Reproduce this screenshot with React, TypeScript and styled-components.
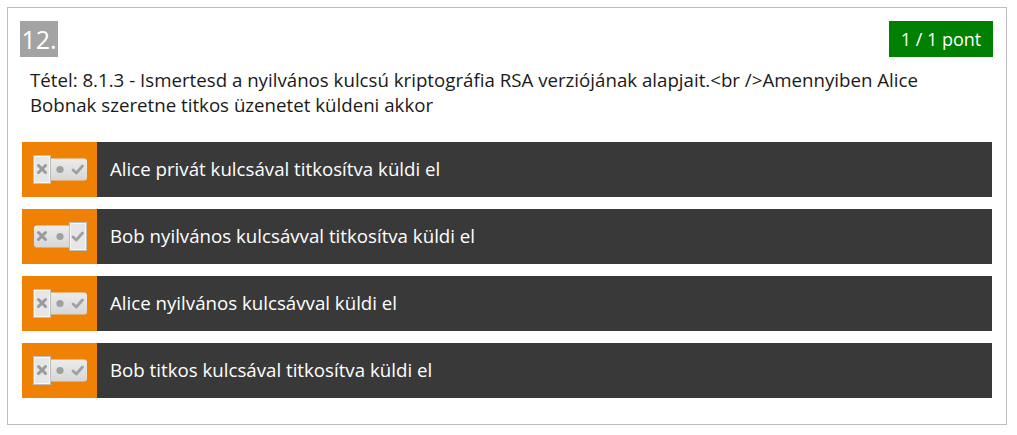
import styled, { createGlobalStyle } from 'styled-components';

const GlobalStyle = createGlobalStyle`
  html, body { margin: 0; padding: 0; background: #ffffff; }
  body { font-family: "Open Sans", "Liberation Sans", sans-serif; }
`;

// ── 스타일 ─────────────────────────────────────────────
const Page = styled.div`
  padding: 7px 10px 10px 7px;
`;

const QuestionBox = styled.div`
  border: 1px solid #bdbdbd;
  padding: 13px 13px 26px 12px;
  display: flex; flex-direction: column;
`;

const Header = styled.div`
  display: flex; align-items: center; justify-content: space-between;
`;

const Number = styled.div`
  background: #a3a3a3;
  color: #ffffff;
  font-size: 25px;
  height: 36px; width: 38px;
  display: flex; align-items: center; justify-content: center;
`;

const Score = styled.div`
  background: #008000;
  color: #ffffff;
  font-size: 18px;
  height: 36px; width: 104px;
  display: flex; align-items: center; justify-content: center;
`;

const Prompt = styled.p`
  margin: 10px 30px 0 10px;
  font-size: 18.7px; line-height: 25px;
  color: #1a1a1a;
`;

const Answers = styled.div`
  margin: 25px 1px 0 2px;
  display: flex; flex-direction: column; gap: 12px;
`;

const Answer = styled.div`
  display: flex; height: 55px;
  background: #393939;
`;

const Marker = styled.div`
  width: 75px; flex-shrink: 0;
  background: #ef8205;
  display: flex; align-items: center; padding-left: 11px;
  box-sizing: border-box;
`;

const Label = styled.div`
  display: flex; align-items: center;
  padding: 0 0 3px 13px;
  color: #ffffff; font-size: 18.7px;
`;

// ── 타입 ─────────────────────────────────────────────
type Choice = 'no' | 'none' | 'yes';

interface Item {
  text:   string;
  choice: Choice;
}

const ITEMS: Item[] = [
  { text: 'Alice privát kulcsával titkosítva küldi el',      choice: 'no' },
  { text: 'Bob nyilvános kulcsávval titkosítva küldi el',   choice: 'yes' },
  { text: 'Alice nyilvános kulcsávval küldi el',            choice: 'no' },
  { text: 'Bob titkos kulcsával titkosítva küldi el',       choice: 'no' },
];

// 세 칸짜리 토글 (✕ / ● / ✓)
function Toggle({ choice }: { choice: Choice }) {
  const frameX = choice === 'no' ? 0.5 : choice === 'yes' ? 36.5 : 18.5;
  return (
    <svg width="55" height="29" viewBox="0 0 55 29">
      <defs>
        <linearGradient id="track" x1="0" y1="0" x2="0" y2="1">
          <stop offset="0" stopColor="#ececec" />
          <stop offset="1" stopColor="#d6d6d6" />
        </linearGradient>
      </defs>
      <rect x="1" y="3.5" width="53" height="22" rx="3" fill="url(#track)" />
      <rect x={frameX} y="0.5" width="17" height="28" fill="#e6e6e6" stroke="#bcbcbc" />
      <rect x={frameX + 1} y="1.5" width="15" height="26" fill="none" stroke="#f7f7f7" />
      {/* x */}
      <path d="M5.5 10.5 L12.5 17.5 M12.5 10.5 L5.5 17.5" stroke="#9a9a9a" strokeWidth="3" strokeLinecap="round" />
      {/* dot */}
      <circle cx="27" cy="14.5" r="3.6" fill="#a0a0a0" />
      {/* check */}
      <path d="M40 15 L43.3 18 L49.5 11" stroke="#a0a0a0" strokeWidth="2.8" fill="none" strokeLinecap="round" strokeLinejoin="round" />
    </svg>
  );
}

// ── 컴포넌트 ─────────────────────────────────────────
export default function App() {
  return (
    <Page>
      <GlobalStyle />
      <QuestionBox>
        <Header>
          <Number>12.</Number>
          <Score>1 / 1 pont</Score>
        </Header>

        <Prompt>
          Tétel: 8.1.3 - Ismertesd a nyilvános kulcsú kriptográfia RSA verziójának alapjait.&lt;br /&gt;Amennyiben Alice Bobnak szeretne titkos üzenetet küldeni akkor
        </Prompt>

        <Answers>
          {ITEMS.map((item) => (
            <Answer key={item.text}>
              <Marker><Toggle choice={item.choice} /></Marker>
              <Label>{item.text}</Label>
            </Answer>
          ))}
        </Answers>
      </QuestionBox>
    </Page>
  );
}
